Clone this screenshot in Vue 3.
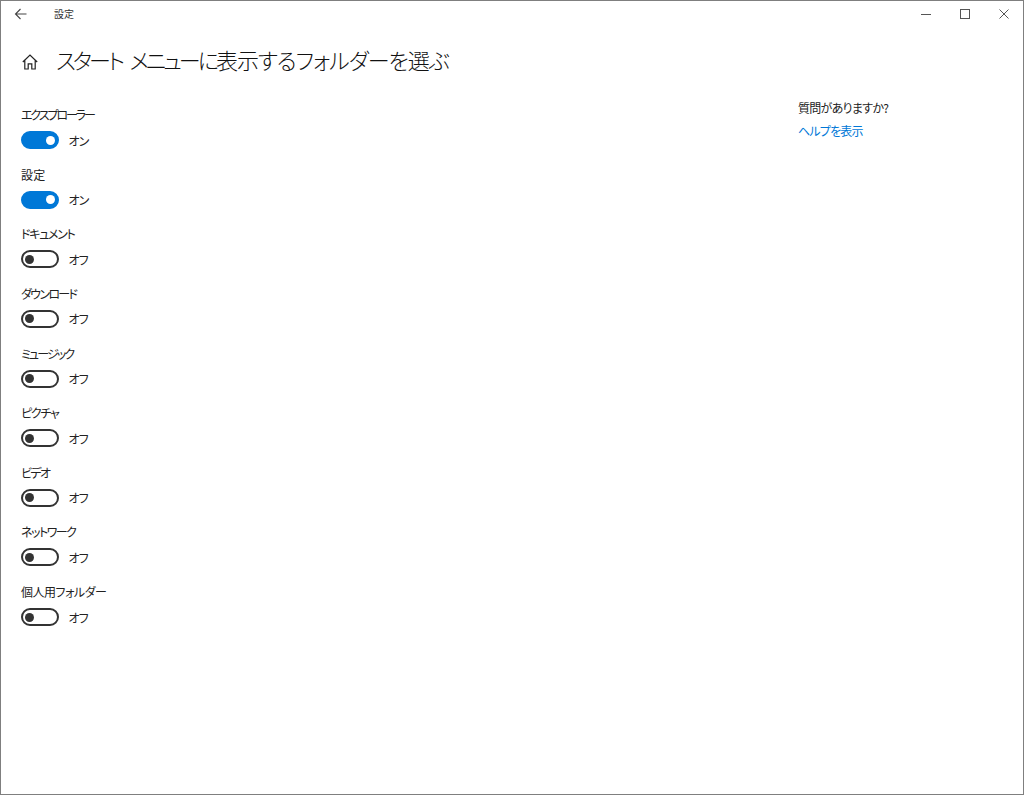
<template>
  <div class="window">
    <!-- title bar -->
    <header class="titlebar">
      <div class="titlebar-left">
        <svg class="back-icon" width="14" height="12" viewBox="0 0 14 12" fill="none">
          <path d="M12.5 6H1.5M6.5 1L1.5 6L6.5 11" stroke="#444" stroke-width="1.1" />
        </svg>
        <span class="window-title">設定</span>
      </div>
      <div class="window-controls">
        <span class="control">
          <svg width="10" height="10" viewBox="0 0 10 10" fill="none">
            <path d="M0 5.5H10" stroke="#555" stroke-width="1" />
          </svg>
        </span>
        <span class="control">
          <svg width="10" height="10" viewBox="0 0 10 10" fill="none">
            <rect x="0.5" y="0.5" width="9" height="9" stroke="#555" stroke-width="1" />
          </svg>
        </span>
        <span class="control">
          <svg width="10" height="10" viewBox="0 0 10 10" fill="none">
            <path d="M0.5 0.5L9.5 9.5M9.5 0.5L0.5 9.5" stroke="#555" stroke-width="1" />
          </svg>
        </span>
      </div>
    </header>

    <div class="content">
      <main class="main-column">
        <div class="page-heading">
          <svg class="home-icon" width="16" height="16" viewBox="0 0 16 16" fill="none">
            <path
              d="M0.8 8L8 1L15.2 8M2.8 6.3V15H6.2V9.8H9.8V15H13.2V6.3"
              stroke="#222"
              stroke-width="1.2"
            />
          </svg>
          <h1 class="page-title"><span class="title-kana">スタート メニューに</span><span class="title-rest">表示するフォルダーを選ぶ</span></h1>
        </div>

        <div class="folder-list">
          <div class="folder-row" v-for="folder in folders" :key="folder.name">
            <div class="folder-name" :style="{ letterSpacing: folder.track + 'px' }">{{ folder.name }}</div>
            <div class="toggle-row">
              <span class="toggle" :class="{ 'toggle--on': folder.on }">
                <span class="toggle-knob"></span>
              </span>
              <span class="toggle-label">{{ folder.on ? "オン" : "オフ" }}</span>
            </div>
          </div>
        </div>
      </main>

      <aside class="help-column">
        <div class="help-title">質問がありますか?</div>
        <a class="help-link">ヘルプを表示</a>
      </aside>
    </div>
  </div>
</template>

<script setup>
// track: kana in the original UI font runs narrower than in Noto
const folders = [
  { name: "エクスプローラー", on: true, track: -2.1 },
  { name: "設定", on: true, track: 0.3 },
  { name: "ドキュメント", on: false, track: -1.3 },
  { name: "ダウンロード", on: false, track: -1.7 },
  { name: "ミュージック", on: false, track: -1.9 },
  { name: "ピクチャ", on: false, track: -1.25 },
  { name: "ビデオ", on: false, track: -1.6 },
  { name: "ネットワーク", on: false, track: -1.5 },
  { name: "個人用フォルダー", on: false, track: -0.5 },
];
</script>

<style>
html,
body {
  margin: 0;
  background: #fff;
}
</style>

<style scoped>
.window {
  box-sizing: border-box;
  width: 1024px;
  height: 795px;
  border: 1px solid #7f7f7f;
  background: #fff;
  color: #1a1a1a;
  font-family: "Noto Sans CJK JP", "Noto Sans", sans-serif;
  font-feature-settings: "palt";
  overflow: hidden;
}

.titlebar {
  display: flex;
  justify-content: space-between;
  height: 30px;
}

.titlebar-left {
  display: flex;
  align-items: center;
  padding-left: 13px;
  height: 25px;
}

.window-title {
  margin-left: 26px;
  font-size: 10px;
  color: #333;
}

.window-controls {
  display: flex;
}

.control {
  display: flex;
  align-items: center;
  justify-content: center;
  width: 39px;
  height: 26px;
}

.content {
  display: flex;
  justify-content: space-between;
}

.main-column {
  padding-left: 20px;
}

.page-heading {
  display: flex;
  align-items: center;
  height: 60px;
}

.home-icon {
  margin-left: 1px;
  margin-top: 2px;
}

.page-title {
  margin: 0 0 4px 18px;
  font-size: 22px;
  font-weight: 300;
  color: #111;
}

.title-kana {
  letter-spacing: -2.9px;
  word-spacing: 5.5px;
}

.title-rest {
  letter-spacing: -1px;
}

.folder-list {
  margin-top: 11px;
}

.folder-row {
  height: 59.65px;
}

.folder-name {
  height: 25px;
  font-size: 12px;
  line-height: 25px;
  color: #222;
}

.toggle-row {
  display: flex;
  align-items: center;
  height: 26px;
}

.toggle {
  box-sizing: border-box;
  display: flex;
  align-items: center;
  width: 38px;
  height: 18px;
  padding: 0 2.5px 0 2px;
  border: 2px solid #333;
  border-radius: 9px;
  background: #fff;
}

.toggle-knob {
  width: 9px;
  height: 9px;
  border-radius: 50%;
  background: #333;
}

.toggle--on {
  justify-content: flex-end;
  border-color: #0078d7;
  background: #0078d7;
}

.toggle--on .toggle-knob {
  background: #fff;
}

.toggle-label {
  margin-left: 9.5px;
  font-size: 12px;
  letter-spacing: -1px;
  color: #222;
}

.help-column {
  width: 225px;
  padding-top: 65px;
}

.help-title {
  height: 23px;
  font-size: 12px;
  line-height: 24px;
  letter-spacing: -0.7px;
  color: #222;
}

.help-link {
  display: block;
  font-size: 12px;
  line-height: 24px;
  letter-spacing: -0.8px;
  color: #0078d7;
}
</style>
